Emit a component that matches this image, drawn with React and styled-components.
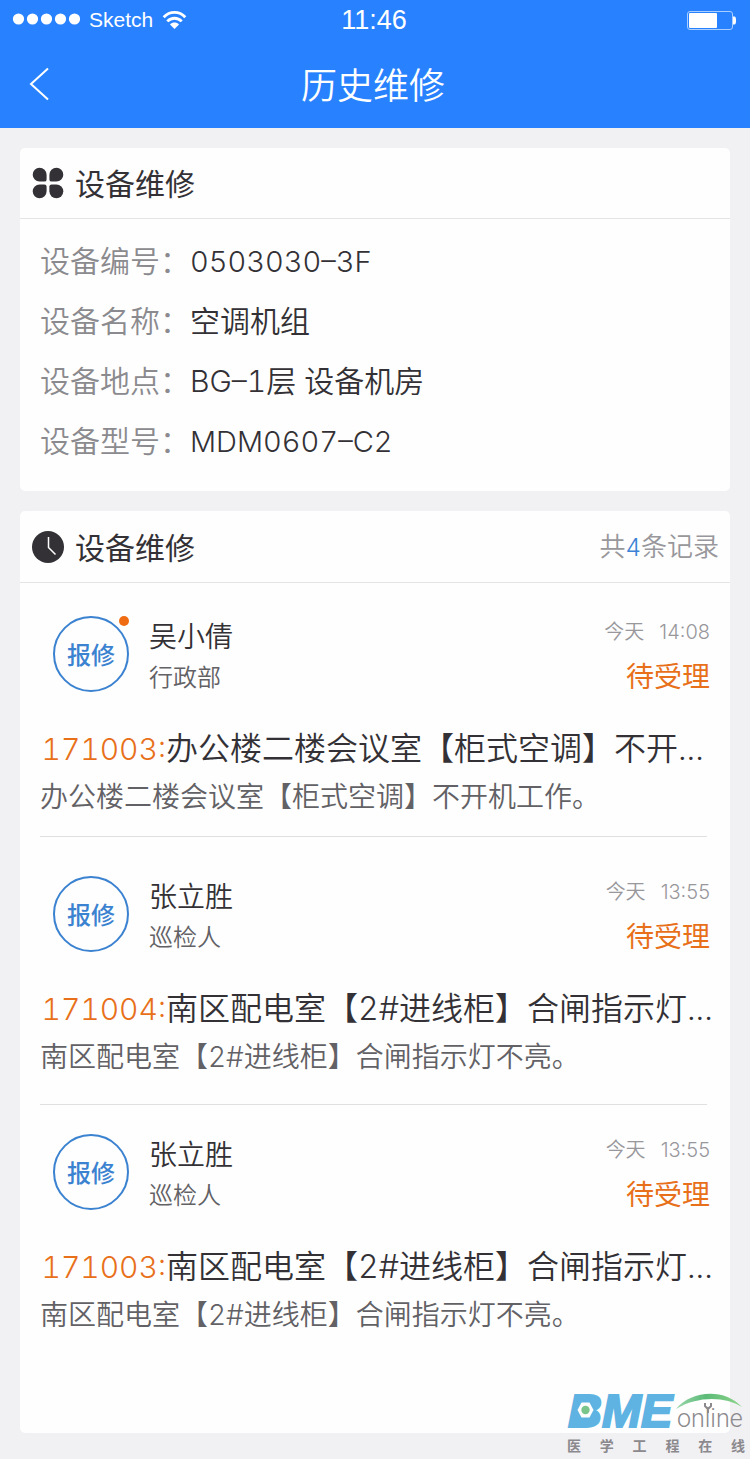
import React from 'react';
import styled, { createGlobalStyle } from 'styled-components';

const GlobalStyle = createGlobalStyle`
  * {
    box-sizing: border-box;
  }
  body {
    margin: 0;
    background: #f1f0f3;
    color: #333135;
    font-family: Inter, 'Noto Sans CJK SC', sans-serif;
    font-weight: 350;
    font-variant-numeric: tabular-nums;
  }
  h1, h2, h3, p, dl, dt, dd, ul {
    margin: 0;
    padding: 0;
    font-weight: inherit;
  }
`;

const Page = styled.div`
  position: relative;
  display: flex;
  flex-direction: column;
  min-height: 100vh;
`;

const Header = styled.header`
  background: #2882ff;
  color: #fff;
`;

const StatusBar = styled.div`
  display: grid;
  grid-template-columns: 1fr auto 1fr;
  align-items: center;
  height: 40px;
  padding: 0 14px 0 12px;
  font-family: 'Liberation Sans', sans-serif;
  font-weight: 400;
`;

const Carrier = styled.div`
  display: flex;
  align-items: center;
  gap: 9px;
  font-size: 21px;
`;

const Clock = styled.time`
  font-size: 27px;
`;

const Battery = styled.svg`
  justify-self: end;
`;

const NavBar = styled.div`
  display: grid;
  grid-template-columns: 72px 1fr 76px;
  align-items: center;
  height: 88px;
  h1{
    padding-top: 4px;
    font-size: 36px;
    line-height: 48px;
    text-align: center;
  }
`;

const BackButton = styled.button`
  display: flex;
  align-items: center;
  justify-content: flex-end;
  width: 49px;
  height: 88px;
  padding: 0;
  border: 0;
  background: none;
  color: inherit;
`;

const Content = styled.main`
  display: flex;
  flex: 1;
  flex-direction: column;
  gap: 20px;
  padding: 20px 20px 26px;
`;

const Card = styled.section`
  flex: ${props => (props.$grow ? 1 : 'none')};
  background: #fefefe;
  border-radius: 5px;
`;

const CardHeader = styled.div`
  display: flex;
  align-items: center;
  gap: 11px;
  height: ${props => (props.$tall ? 72 : 71)}px;
  padding: 0 11px 0 12px;
  border-bottom: 1px solid #e4e3e6;
  h2{
    flex: 1;
    padding-top: 2px;
    font-size: 30px;
    font-weight: 400;
    line-height: 40px;
  }
`;

const Total = styled.p`
  padding-top: 2px;
  color: #98979b;
  font-size: 26px;
  line-height: 36px;
  span{
    color: #3b82d6;
    font-size: 24px;
  }
`;

const DeviceInfo = styled.dl`
  padding: 12px 20px 20px;
`;

const InfoRow = styled.div`
  display: flex;
  align-items: baseline;
  height: 60px;
  font-size: 30px;
  line-height: 60px;
  dt{
    width: 150px;
    color: #8b8a8e;
  }
`;

const InfoValue = styled.dd`
  font-size: ${props => (props.$latin ? 29 : 30)}px;
`;

const RecordList = styled.ul`
  list-style: none;
  padding: 0 20px;
`;

const Record = styled.li`
  padding: ${props => props.$top}px 0 ${props => props.$bottom}px;
  border-bottom: ${props => (props.$last ? '0' : '1px solid #e0dfe2')};
  margin-right: 3px;
`;

const RecordHead = styled.div`
  display: flex;
  gap: 20px;
  height: 76px;
  padding-left: 13px;
  margin-right: -3px;
`;

const Badge = styled.div`
  position: relative;
  display: flex;
  align-items: center;
  justify-content: center;
  width: 76px;
  height: 76px;
  padding-top: 4px;
  border: 2px solid #3b82d0;
  border-radius: 50%;
  color: #3b82d0;
  font-size: 24px;
  font-weight: 500;
  line-height: 38px;
`;

const UnreadDot = styled.i`
  position: absolute;
  top: -2px;
  right: -2px;
  width: 10px;
  height: 10px;
  border-radius: 50%;
  background: #f06c12;
`;

const Person = styled.div`
  flex: 1;
  h3{
    font-size: 28px;
    line-height: 42px;
  }
  p{
    color: #626165;
    font-size: 24px;
    line-height: 40px;
  }
`;

const Progress = styled.div`
  text-align: right;
  p{
    color: #e8701a;
    font-size: 28px;
    font-weight: 400;
    line-height: 58px;
  }
`;

const ReportTime = styled.time`
  display: flex;
  justify-content: flex-end;
  gap: 15px;
  color: #98979b;
  font-size: 20px;
  font-variant-numeric: normal;
  line-height: 32px;
`;

const RecordTitle = styled.p`
  margin-top: 33px;
  margin-right: -3px;
  font-size: 32px;
  line-height: 48px;
  white-space: nowrap;
  span{
    display: inline-block;
    min-width: 126px;
    color: #e8701a;
    font-size: 30px;
    text-align: right;
  }
`;

const RecordText = styled.p`
  color: #626165;
  font-size: 28px;
  line-height: 48px;
`;

const Watermark = styled.div`
  position: absolute;
  right: 5px;
  bottom: 4px;
  width: 178px;
  svg{
    display: block;
    overflow: visible;
  }
`;

const WatermarkText = styled.div`
  display: flex;
  justify-content: space-between;
  color: #8b898d;
  font-size: 14px;
  font-weight: 700;
  line-height: 18px;
`;

const device = [
  { label: '设备编号', value: '0503030–3F', latin: true },
  { label: '设备名称', value: '空调机组' },
  { label: '设备地点', value: 'BG–1层 设备机房' },
  { label: '设备型号', value: 'MDM0607–C2', latin: true },
];

const records = [
  {
    code: '171003',
    name: '吴小倩',
    role: '行政部',
    time: '14:08',
    title: '办公楼二楼会议室【柜式空调】不开...',
    text: '办公楼二楼会议室【柜式空调】不开机工作。',
    unread: true,
    top: 33,
    bottom: 15,
  },
  {
    code: '171004',
    name: '张立胜',
    role: '巡检人',
    time: '13:55',
    title: '南区配电室【2#进线柜】合闸指示灯...',
    text: '南区配电室【2#进线柜】合闸指示灯不亮。',
    top: 39,
    bottom: 23,
  },
  {
    code: '171003',
    name: '张立胜',
    role: '巡检人',
    time: '13:55',
    title: '南区配电室【2#进线柜】合闸指示灯...',
    text: '南区配电室【2#进线柜】合闸指示灯不亮。',
    top: 29,
    bottom: 23,
  },
];

function SignalDots() {
  return (
    <svg width="68" height="14" fill="#fff">
      {[6, 20, 34, 48, 62].map(x => <circle key={x} cx={x + 0.5} cy="6" r="5.6" />)}
    </svg>
  );
}

function WifiIcon() {
  return (
    <svg width="25" height="19" viewBox="0 0 24 19" fill="none" stroke="#fff" strokeWidth="2.8">
      <path d="M1.2 6.2C7.2 -.2 16.8 -.2 22.8 6.2" />
      <path d="M4.800 10.400C8.800 6.200 15.200 6.200 19.200 10.400" />
      <path d="M7.500 13.400C10 11 14 11 16.500 13.400L12 18Z" fill="#fff" stroke="none" />
    </svg>
  );
}

function BatteryIcon() {
  return (
    <Battery width="49" height="19" viewBox="0 0 49 19">
      <rect x=".5" y=".5" width="45" height="18" rx="2.5" fill="none" stroke="#a9cdff" />
      <rect x="2" y="2" width="28" height="15" rx="1" fill="#fff" />
      <path d="M46 5.500H47.500Q49 5.500 49 9.500T47.500 13.500H46Z" fill="#fff" />
    </Battery>
  );
}

function CloverIcon() {
  return (
    <svg width="32" height="32" viewBox="0 0 32 32" fill="#333135">
      <path d="M7.600 .8A6.900 6.900 0 0 0 7.600 14.600H12.400Q14.600 14.600 14.600 12.400V7.800A7 7 0 0 0 7.600 .8Z" />
      <path d="M24.400 .8A6.900 6.900 0 0 1 24.400 14.600H19.600Q17.400 14.600 17.400 12.400V7.800A7 7 0 0 1 24.400 .8Z" />
      <path d="M7.600 31.200A6.900 6.900 0 0 1 7.600 17.400H12.400Q14.600 17.400 14.600 19.600V24.200A7 7 0 0 1 7.600 31.200Z" />
      <path d="M24.400 31.200A6.900 6.900 0 0 0 24.400 17.400H19.600Q17.400 17.400 17.400 19.600V24.200A7 7 0 0 0 24.400 31.200Z" />
    </svg>
  );
}

function ClockIcon() {
  return (
    <svg width="32" height="32" viewBox="0 0 32 32">
      <circle cx="16" cy="16" r="16" fill="#333135" />
      <path d="M16.500 6V16.500L23.500 23.500" fill="none" stroke="#fff" strokeWidth="1.500" />
    </svg>
  );
}

function BrandLogo() {
  return (
    <svg width="178" height="44" viewBox="0 0 178 44">
      <defs>
        <linearGradient id="arc">
          <stop offset="0" stopColor="#9ad6ac" />
          <stop offset=".45" stopColor="#5cbb78" />
          <stop offset="1" stopColor="#8ed48a" />
        </linearGradient>
      </defs>
      <text x="1" y="34" fill="#5fb3e2" stroke="#5fb3e2" strokeWidth="2" fontFamily="Liberation Sans" fontSize="47" fontWeight="700" fontStyle="italic">BME</text>
      <path d="M10 4H28V31H5Z" fill="#5fb3e2" />
      <path d="M14.500 9.500H22.500L26.500 17L22.500 24.500H14.500L10.500 17Z" fill="#fefefe" />
      <circle cx="18.500" cy="17" r="4.200" fill="#79c58c" />
      <path d="M109 16C124 -3 158 -5 175 14C158 3 130 3 109 16Z" fill="url(#arc)" />
      <text x="110" y="34" fill="#8b898d" fontFamily="Roboto" fontSize="25" fontWeight="300">online</text>
      <path d="M138 10V13L141 16L144 13V10M141 16V20" fill="none" stroke="#8b898d" strokeWidth="2" />
    </svg>
  );
}

function RepairRecord({ record, last }) {
  return (
    <Record $top={record.top} $bottom={record.bottom} $last={last}>
      <RecordHead>
        <Badge>
          报修
          {record.unread && <UnreadDot />}
        </Badge>
        <Person>
          <h3>{record.name}</h3>
          <p>{record.role}</p>
        </Person>
        <Progress>
          <ReportTime>
            <span>今天</span>
            <span>{record.time}</span>
          </ReportTime>
          <p>待受理</p>
        </Progress>
      </RecordHead>
      <RecordTitle>
        <span>{`${record.code}:`}</span>
        {record.title}
      </RecordTitle>
      <RecordText>{record.text}</RecordText>
    </Record>
  );
}

function App() {
  return (
    <Page>
      <GlobalStyle />
      <Header>
        <StatusBar>
          <Carrier>
            <SignalDots />
            Sketch
            <WifiIcon />
          </Carrier>
          <Clock>11:46</Clock>
          <BatteryIcon />
        </StatusBar>
        <NavBar>
          <BackButton aria-label="返回">
            <svg width="20" height="34" viewBox="0 0 20 34" fill="none" stroke="#fff" strokeWidth="2">
              <path d="M19 1.500L2 17L19 32.500" />
            </svg>
          </BackButton>
          <h1>历史维修</h1>
        </NavBar>
      </Header>
      <Content>
        <Card>
          <CardHeader>
            <CloverIcon />
            <h2>设备维修</h2>
          </CardHeader>
          <DeviceInfo>
            {device.map(({ label, value, latin }) => (
              <InfoRow key={label}>
                <dt>{`${label}：`}</dt>
                <InfoValue $latin={latin}>{value}</InfoValue>
              </InfoRow>
            ))}
          </DeviceInfo>
        </Card>
        <Card $grow>
          <CardHeader $tall>
            <ClockIcon />
            <h2>设备维修</h2>
            <Total>共<span>4</span>条记录</Total>
          </CardHeader>
          <RecordList>
            {records.map((record, i) => (
              <RepairRecord key={i} record={record} last={i === records.length - 1} />
            ))}
          </RecordList>
        </Card>
      </Content>
      <Watermark>
        <BrandLogo />
        <WatermarkText>
          {'医学工程在线'.split('').map((char, i) => <span key={i}>{char}</span>)}
        </WatermarkText>
      </Watermark>
    </Page>
  );
}

export default App;
